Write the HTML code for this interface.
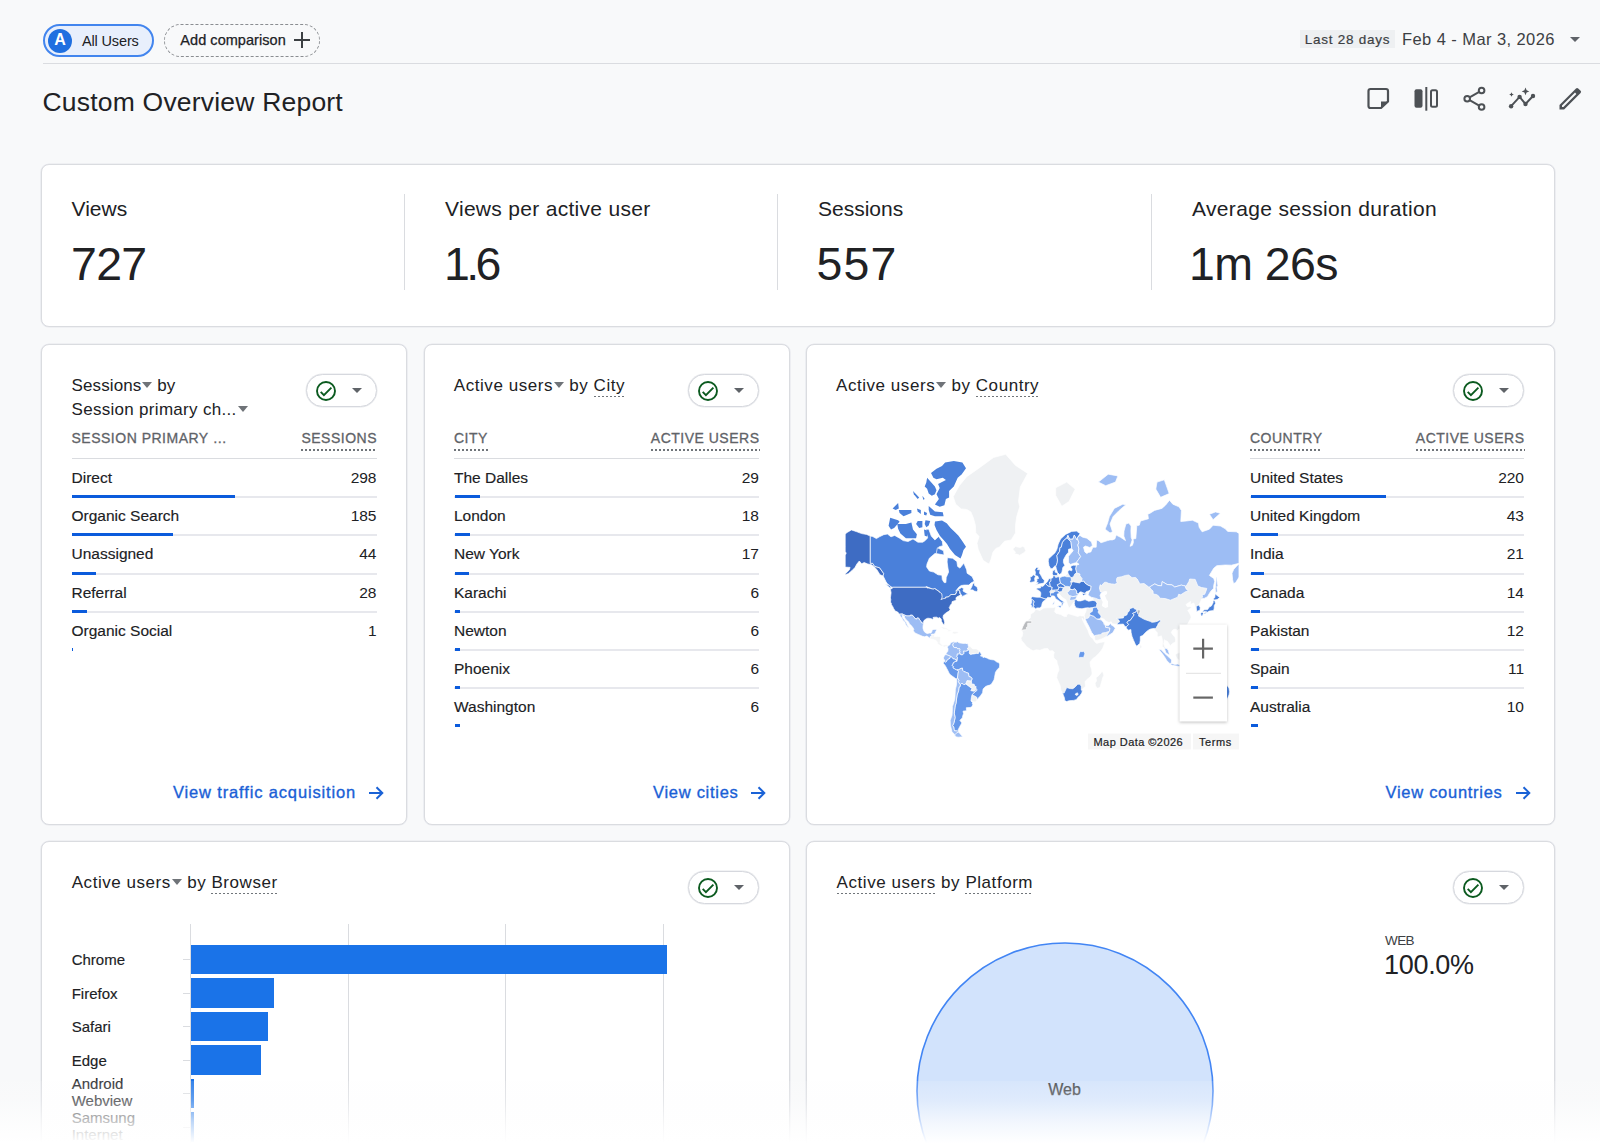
<!DOCTYPE html>
<html><head><meta charset="utf-8">
<style>
*{margin:0;padding:0;box-sizing:border-box}
html,body{width:1600px;height:1147px;overflow:hidden;background:#f8f9fa;font-family:"Liberation Sans",sans-serif;color:#202124;position:relative}
.a{position:absolute;white-space:nowrap;line-height:1}
.ttl{font-size:17px;color:#202124;letter-spacing:0.55px}
.tri{display:inline-block;width:0;height:0;border-left:5.5px solid transparent;border-right:5.5px solid transparent;border-top:6px solid #6f7378;vertical-align:3px;margin-left:1px}
.du{background-image:linear-gradient(to right,#70757a 60%,transparent 60%);background-size:4px 1.5px;background-repeat:repeat-x;background-position:0 100%;padding-bottom:2px}
.thu{background-image:linear-gradient(to right,#70757a 60%,transparent 60%);background-size:4px 2px;background-repeat:repeat-x;background-position:0 100%;padding-bottom:5px}
</style></head>
<body>
<div class="a" style="left:43px;top:24px;width:111px;height:33px;border:2px solid #4285ee;border-radius:17px;background:#e8effc"></div>
<div class="a" style="left:48px;top:28.5px;width:24px;height:24px;border-radius:50%;background:#1f6fe0"></div>
<div class="a" style="left:-240.00px;width:600px;text-align:center;top:32.46px;font-size:16px;color:#fff;font-weight:bold">A</div>
<div class="a" style="left:82.00px;top:33.63px;font-size:14.5px;color:#202124;letter-spacing:-0.15px">All Users</div>
<div class="a" style="left:164px;top:24px;width:156px;height:33px;border:1.5px dashed #8a8d91;border-radius:17px"></div>
<div class="a" style="left:180.30px;top:32.53px;font-size:14.5px;color:#202124;-webkit-text-stroke:0.25px #202124;letter-spacing:0.05px">Add comparison</div>
<svg class="a" style="left:294px;top:32px" width="16" height="16"><path d="M8 0v16M0 8h16" stroke="#3c4043" stroke-width="2"/></svg>
<div class="a" style="left:1300px;top:30px;width:95px;height:18px;background:#eef0f2"></div>
<div class="a" style="left:1304.80px;top:32.97px;font-size:13.5px;color:#3c4043;letter-spacing:0.75px;-webkit-text-stroke:0.2px #3c4043">Last 28 days</div>
<div class="a" style="left:1402.00px;top:30.83px;font-size:16.5px;color:#3c4043;letter-spacing:0.42px">Feb 4 - Mar 3, 2026</div>
<svg class="a" style="left:1570px;top:37px" width="10" height="5"><path d="M0 0h10L5 5z" fill="#5f6368"/></svg>
<div class="a" style="left:43px;top:63px;width:1557px;height:1px;background:#dadce0"></div>
<div class="a" style="left:42.50px;top:89.17px;font-size:26.5px;letter-spacing:0.2px">Custom Overview Report</div>
<svg class="a" style="left:1360px;top:80px" width="230" height="40" viewBox="1360 80 230 40">
<g fill="none" stroke="#4d5155" stroke-width="2.2" stroke-linejoin="round">
<path d="M1381 108H1370.5a2 2 0 0 1-2-2V91a2 2 0 0 1 2-2h15.5a2 2 0 0 1 2 2v10.5z"/>
</g>
<path d="M1381 108v-6.5h7z" fill="#4d5155"/>
<rect x="1414.5" y="89.3" width="8" height="18.5" rx="2" fill="#4d5155"/>
<rect x="1431" y="90.3" width="6" height="16.5" rx="1.5" fill="none" stroke="#4d5155" stroke-width="2"/>
<rect x="1425.3" y="87" width="2" height="23.7" fill="#4d5155"/>
<g stroke="#4d5155" stroke-width="2" fill="none">
<circle cx="1481.6" cy="90.5" r="2.8"/><circle cx="1467.2" cy="98.7" r="2.8"/><circle cx="1481.6" cy="107" r="2.8"/>
<path d="M1469.6 97.3L1479.2 91.9M1469.6 100.1L1479.2 105.6"/>
<path d="M1511.1 106.2L1519.6 96.9L1525.5 104L1533 96"/>
</g>
<g fill="#4d5155">
<circle cx="1511.1" cy="106.2" r="2.2"/><circle cx="1519.6" cy="96.9" r="2.2"/><circle cx="1525.5" cy="104" r="2.2"/><circle cx="1533" cy="96" r="2.2"/>
<path d="M1525.5 87.6l1.1 2.7 2.7 1.1-2.7 1.1-1.1 2.7-1.1-2.7-2.7-1.1 2.7-1.1z"/>
<path d="M1511.5 92.2l.7 1.6 1.6.7-1.6.7-.7 1.6-.7-1.6-1.6-.7 1.6-.7z"/>
<path d="M1559.5 109.5v-4.6l16.5-16.5a1.6 1.6 0 0 1 2.2 0l2.4 2.4a1.6 1.6 0 0 1 0 2.2L1564.1 109.5z M1562 107h1.4l13-13-1.4-1.4-13 13z" fill-rule="evenodd"/>
</g>
</svg>
<div class="a" style="left:41px;top:164px;width:1514px;height:163px;background:#fff;border:1px solid #dadce0;border-radius:8px;box-shadow:0 0 0 0.6px rgba(218,220,228,.6)"></div>
<div class="a" style="left:404px;top:194px;width:1px;height:96px;background:#dadce0"></div>
<div class="a" style="left:777px;top:194px;width:1px;height:96px;background:#dadce0"></div>
<div class="a" style="left:1151px;top:194px;width:1px;height:96px;background:#dadce0"></div>
<div class="a" style="left:71.50px;top:197.82px;font-size:21px;">Views</div>
<div class="a" style="left:445.00px;top:197.82px;font-size:21px;letter-spacing:0.3px">Views per active user</div>
<div class="a" style="left:818.00px;top:197.82px;font-size:21px;">Sessions</div>
<div class="a" style="left:1192.00px;top:197.82px;font-size:21px;letter-spacing:0.35px">Average session duration</div>
<div class="a" style="left:71.00px;top:240.64px;font-size:46.5px;letter-spacing:-0.7px">727</div>
<div class="a" style="left:444.00px;top:240.64px;font-size:46.5px;letter-spacing:-3.6px">1.6</div>
<div class="a" style="left:816.50px;top:240.64px;font-size:46.5px;letter-spacing:1.2px">557</div>
<div class="a" style="left:1189.00px;top:240.64px;font-size:46.5px;letter-spacing:-0.6px">1m 26s</div>
<div class="a" style="left:41px;top:344px;width:366px;height:481px;background:#fff;border:1px solid #dadce0;border-radius:8px;box-shadow:0 0 0 0.6px rgba(218,220,228,.6)"></div>
<div class="a" style="left:424px;top:344px;width:366px;height:481px;background:#fff;border:1px solid #dadce0;border-radius:8px;box-shadow:0 0 0 0.6px rgba(218,220,228,.6)"></div>
<div class="a" style="left:806px;top:344px;width:749px;height:481px;background:#fff;border:1px solid #dadce0;border-radius:8px;box-shadow:0 0 0 0.6px rgba(218,220,228,.6)"></div>
<div class="a" style="left:41px;top:841px;width:749px;height:460px;background:#fff;border:1px solid #dadce0;border-radius:8px;box-shadow:0 0 0 0.6px rgba(218,220,228,.6)"></div>
<div class="a" style="left:806px;top:841px;width:749px;height:460px;background:#fff;border:1px solid #dadce0;border-radius:8px;box-shadow:0 0 0 0.6px rgba(218,220,228,.6)"></div>
<div class="a ttl" style="left:71.5px;top:376.91px;letter-spacing:0.12px">Sessions<span class="tri"></span> by</div>
<div class="a ttl" style="left:71.5px;top:400.61px;letter-spacing:0.3px">Session primary ch...<span class="tri"></span></div>
<div class="a" style="left:306px;top:374px;width:71px;height:33px;border:1px solid #d6d8de;border-radius:17px;background:#fff;box-shadow:0 0 0 0.5px rgba(214,216,222,.6)"></div>
<svg class="a" style="left:315px;top:379.5px" width="22" height="22"><circle cx="11" cy="11" r="9" fill="none" stroke="#0b5a1f" stroke-width="1.9"/><path d="M5.7 11.9L8.9 15.1L16.4 7.6" fill="none" stroke="#0b5a1f" stroke-width="1.9"/></svg>
<svg class="a" style="left:352px;top:388.0px" width="10" height="5"><path d="M0 0h10L5 5z" fill="#5f6368"/></svg>
<div class="a" style="left:71.50px;top:431.15px;font-size:14px;color:#5f6368;letter-spacing:0.5px;-webkit-text-stroke:0.3px #5f6368"><span class="">SESSION PRIMARY …</span></div>
<div class="a" style="right:1223.00px;top:431.15px;font-size:14px;color:#5f6368;letter-spacing:0.5px;-webkit-text-stroke:0.3px #5f6368"><span class="thu">SESSIONS</span></div>
<div class="a" style="left:71.5px;top:458px;width:305.0px;height:1px;background:#dadce0"></div>
<div class="a" style="left:71.50px;top:469.88px;font-size:15.5px;color:#202124;-webkit-text-stroke:0.15px #202124">Direct</div>
<div class="a" style="right:1223.50px;top:469.88px;font-size:15.5px;color:#202124">298</div>
<div class="a" style="left:71.5px;top:496px;width:305.0px;height:2px;background:#e7e8ed"></div>
<div class="a" style="left:72.0px;top:495px;width:163.2px;height:3px;background:#0b5bdc"></div>
<div class="a" style="left:71.50px;top:508.13px;font-size:15.5px;color:#202124;-webkit-text-stroke:0.15px #202124">Organic Search</div>
<div class="a" style="right:1223.50px;top:508.13px;font-size:15.5px;color:#202124">185</div>
<div class="a" style="left:71.5px;top:534px;width:305.0px;height:2px;background:#e7e8ed"></div>
<div class="a" style="left:72.0px;top:533px;width:101.3px;height:3px;background:#0b5bdc"></div>
<div class="a" style="left:71.50px;top:546.38px;font-size:15.5px;color:#202124;-webkit-text-stroke:0.15px #202124">Unassigned</div>
<div class="a" style="right:1223.50px;top:546.38px;font-size:15.5px;color:#202124">44</div>
<div class="a" style="left:71.5px;top:573px;width:305.0px;height:2px;background:#e7e8ed"></div>
<div class="a" style="left:72.0px;top:572px;width:24.1px;height:3px;background:#0b5bdc"></div>
<div class="a" style="left:71.50px;top:584.63px;font-size:15.5px;color:#202124;-webkit-text-stroke:0.15px #202124">Referral</div>
<div class="a" style="right:1223.50px;top:584.63px;font-size:15.5px;color:#202124">28</div>
<div class="a" style="left:71.5px;top:611px;width:305.0px;height:2px;background:#e7e8ed"></div>
<div class="a" style="left:72.0px;top:610px;width:15.3px;height:3px;background:#0b5bdc"></div>
<div class="a" style="left:71.50px;top:622.88px;font-size:15.5px;color:#202124;-webkit-text-stroke:0.15px #202124">Organic Social</div>
<div class="a" style="right:1223.50px;top:622.88px;font-size:15.5px;color:#202124">1</div>
<div class="a" style="left:72.0px;top:648px;width:1.2px;height:3px;background:#0b5bdc"></div>
<div class="a" style="left:173.00px;top:784.03px;font-size:16.5px;color:#1a5fd6;letter-spacing:0.85px;-webkit-text-stroke:0.35px #1a5fd6">View traffic acquisition</div>
<svg class="a" style="left:367.8px;top:785.5px" width="16" height="14"><path d="M1 7h13M8.5 1.2L14.3 7 8.5 12.8" fill="none" stroke="#1a62d6" stroke-width="2"/></svg>
<div class="a ttl" style="left:453.8px;top:377.21px">Active users<span class="tri"></span> by <span class="du">City</span></div>
<div class="a" style="left:688px;top:374px;width:71px;height:33px;border:1px solid #d6d8de;border-radius:17px;background:#fff;box-shadow:0 0 0 0.5px rgba(214,216,222,.6)"></div>
<svg class="a" style="left:697px;top:379.5px" width="22" height="22"><circle cx="11" cy="11" r="9" fill="none" stroke="#0b5a1f" stroke-width="1.9"/><path d="M5.7 11.9L8.9 15.1L16.4 7.6" fill="none" stroke="#0b5a1f" stroke-width="1.9"/></svg>
<svg class="a" style="left:734px;top:388.0px" width="10" height="5"><path d="M0 0h10L5 5z" fill="#5f6368"/></svg>
<div class="a" style="left:454.00px;top:431.15px;font-size:14px;color:#5f6368;letter-spacing:0.5px;-webkit-text-stroke:0.3px #5f6368"><span class="thu">CITY</span></div>
<div class="a" style="right:840.50px;top:431.15px;font-size:14px;color:#5f6368;letter-spacing:0.5px;-webkit-text-stroke:0.3px #5f6368"><span class="thu">ACTIVE USERS</span></div>
<div class="a" style="left:454px;top:458px;width:305px;height:1px;background:#dadce0"></div>
<div class="a" style="left:454.00px;top:469.88px;font-size:15.5px;color:#202124;-webkit-text-stroke:0.15px #202124">The Dalles</div>
<div class="a" style="right:841.00px;top:469.88px;font-size:15.5px;color:#202124">29</div>
<div class="a" style="left:454px;top:496px;width:305px;height:2px;background:#e7e8ed"></div>
<div class="a" style="left:454.5px;top:495px;width:25.0px;height:3px;background:#0b5bdc"></div>
<div class="a" style="left:454.00px;top:508.13px;font-size:15.5px;color:#202124;-webkit-text-stroke:0.15px #202124">London</div>
<div class="a" style="right:841.00px;top:508.13px;font-size:15.5px;color:#202124">18</div>
<div class="a" style="left:454px;top:534px;width:305px;height:2px;background:#e7e8ed"></div>
<div class="a" style="left:454.5px;top:533px;width:15.5px;height:3px;background:#0b5bdc"></div>
<div class="a" style="left:454.00px;top:546.38px;font-size:15.5px;color:#202124;-webkit-text-stroke:0.15px #202124">New York</div>
<div class="a" style="right:841.00px;top:546.38px;font-size:15.5px;color:#202124">17</div>
<div class="a" style="left:454px;top:573px;width:305px;height:2px;background:#e7e8ed"></div>
<div class="a" style="left:454.5px;top:572px;width:14.6px;height:3px;background:#0b5bdc"></div>
<div class="a" style="left:454.00px;top:584.63px;font-size:15.5px;color:#202124;-webkit-text-stroke:0.15px #202124">Karachi</div>
<div class="a" style="right:841.00px;top:584.63px;font-size:15.5px;color:#202124">6</div>
<div class="a" style="left:454px;top:611px;width:305px;height:2px;background:#e7e8ed"></div>
<div class="a" style="left:454.5px;top:610px;width:5.2px;height:3px;background:#0b5bdc"></div>
<div class="a" style="left:454.00px;top:622.88px;font-size:15.5px;color:#202124;-webkit-text-stroke:0.15px #202124">Newton</div>
<div class="a" style="right:841.00px;top:622.88px;font-size:15.5px;color:#202124">6</div>
<div class="a" style="left:454px;top:649px;width:305px;height:2px;background:#e7e8ed"></div>
<div class="a" style="left:454.5px;top:648px;width:5.2px;height:3px;background:#0b5bdc"></div>
<div class="a" style="left:454.00px;top:661.13px;font-size:15.5px;color:#202124;-webkit-text-stroke:0.15px #202124">Phoenix</div>
<div class="a" style="right:841.00px;top:661.13px;font-size:15.5px;color:#202124">6</div>
<div class="a" style="left:454px;top:687px;width:305px;height:2px;background:#e7e8ed"></div>
<div class="a" style="left:454.5px;top:686px;width:5.2px;height:3px;background:#0b5bdc"></div>
<div class="a" style="left:454.00px;top:699.38px;font-size:15.5px;color:#202124;-webkit-text-stroke:0.15px #202124">Washington</div>
<div class="a" style="right:841.00px;top:699.38px;font-size:15.5px;color:#202124">6</div>
<div class="a" style="left:454.5px;top:724px;width:5.2px;height:3px;background:#0b5bdc"></div>
<div class="a" style="left:653.00px;top:784.03px;font-size:16.5px;color:#1a5fd6;letter-spacing:0.72px;-webkit-text-stroke:0.35px #1a5fd6">View cities</div>
<svg class="a" style="left:750.3px;top:785.5px" width="16" height="14"><path d="M1 7h13M8.5 1.2L14.3 7 8.5 12.8" fill="none" stroke="#1a62d6" stroke-width="2"/></svg>
<div class="a ttl" style="left:836px;top:377.21px">Active users<span class="tri"></span> by <span class="du">Country</span></div>
<div class="a" style="left:1453px;top:374px;width:71px;height:33px;border:1px solid #d6d8de;border-radius:17px;background:#fff;box-shadow:0 0 0 0.5px rgba(214,216,222,.6)"></div>
<svg class="a" style="left:1462px;top:379.5px" width="22" height="22"><circle cx="11" cy="11" r="9" fill="none" stroke="#0b5a1f" stroke-width="1.9"/><path d="M5.7 11.9L8.9 15.1L16.4 7.6" fill="none" stroke="#0b5a1f" stroke-width="1.9"/></svg>
<svg class="a" style="left:1499px;top:388.0px" width="10" height="5"><path d="M0 0h10L5 5z" fill="#5f6368"/></svg>
<div class="a" style="left:1250.00px;top:431.15px;font-size:14px;color:#5f6368;letter-spacing:0.5px;-webkit-text-stroke:0.3px #5f6368"><span class="thu">COUNTRY</span></div>
<div class="a" style="right:75.50px;top:431.15px;font-size:14px;color:#5f6368;letter-spacing:0.5px;-webkit-text-stroke:0.3px #5f6368"><span class="thu">ACTIVE USERS</span></div>
<div class="a" style="left:1250px;top:458px;width:274px;height:1px;background:#dadce0"></div>
<div class="a" style="left:1250.00px;top:469.88px;font-size:15.5px;color:#202124;-webkit-text-stroke:0.15px #202124">United States</div>
<div class="a" style="right:76.00px;top:469.88px;font-size:15.5px;color:#202124">220</div>
<div class="a" style="left:1250px;top:496px;width:274px;height:2px;background:#e7e8ed"></div>
<div class="a" style="left:1250.5px;top:495px;width:135.0px;height:3px;background:#0b5bdc"></div>
<div class="a" style="left:1250.00px;top:508.13px;font-size:15.5px;color:#202124;-webkit-text-stroke:0.15px #202124">United Kingdom</div>
<div class="a" style="right:76.00px;top:508.13px;font-size:15.5px;color:#202124">43</div>
<div class="a" style="left:1250px;top:534px;width:274px;height:2px;background:#e7e8ed"></div>
<div class="a" style="left:1250.5px;top:533px;width:27.2px;height:3px;background:#0b5bdc"></div>
<div class="a" style="left:1250.00px;top:546.38px;font-size:15.5px;color:#202124;-webkit-text-stroke:0.15px #202124">India</div>
<div class="a" style="right:76.00px;top:546.38px;font-size:15.5px;color:#202124">21</div>
<div class="a" style="left:1250px;top:573px;width:274px;height:2px;background:#e7e8ed"></div>
<div class="a" style="left:1250.5px;top:572px;width:13.8px;height:3px;background:#0b5bdc"></div>
<div class="a" style="left:1250.00px;top:584.63px;font-size:15.5px;color:#202124;-webkit-text-stroke:0.15px #202124">Canada</div>
<div class="a" style="right:76.00px;top:584.63px;font-size:15.5px;color:#202124">14</div>
<div class="a" style="left:1250px;top:611px;width:274px;height:2px;background:#e7e8ed"></div>
<div class="a" style="left:1250.5px;top:610px;width:9.5px;height:3px;background:#0b5bdc"></div>
<div class="a" style="left:1250.00px;top:622.88px;font-size:15.5px;color:#202124;-webkit-text-stroke:0.15px #202124">Pakistan</div>
<div class="a" style="right:76.00px;top:622.88px;font-size:15.5px;color:#202124">12</div>
<div class="a" style="left:1250px;top:649px;width:274px;height:2px;background:#e7e8ed"></div>
<div class="a" style="left:1250.5px;top:648px;width:8.3px;height:3px;background:#0b5bdc"></div>
<div class="a" style="left:1250.00px;top:661.13px;font-size:15.5px;color:#202124;-webkit-text-stroke:0.15px #202124">Spain</div>
<div class="a" style="right:76.00px;top:661.13px;font-size:15.5px;color:#202124">11</div>
<div class="a" style="left:1250px;top:687px;width:274px;height:2px;background:#e7e8ed"></div>
<div class="a" style="left:1250.5px;top:686px;width:7.7px;height:3px;background:#0b5bdc"></div>
<div class="a" style="left:1250.00px;top:699.38px;font-size:15.5px;color:#202124;-webkit-text-stroke:0.15px #202124">Australia</div>
<div class="a" style="right:76.00px;top:699.38px;font-size:15.5px;color:#202124">10</div>
<div class="a" style="left:1250.5px;top:724px;width:7.1px;height:3px;background:#0b5bdc"></div>
<div class="a" style="left:1385.50px;top:784.03px;font-size:16.5px;color:#1a5fd6;letter-spacing:0.72px;-webkit-text-stroke:0.35px #1a5fd6">View countries</div>
<svg class="a" style="left:1515.3px;top:785.5px" width="16" height="14"><path d="M1 7h13M8.5 1.2L14.3 7 8.5 12.8" fill="none" stroke="#1a62d6" stroke-width="2"/></svg>
<svg class="a" style="left:0;top:0" width="1600" height="1147" viewBox="0 0 1600 1147"><defs><clipPath id="mc"><rect x="845.6" y="440" width="393" height="310"/></clipPath></defs><g clip-path="url(#mc)" stroke-linejoin="round">
<path d="M953.2 496.7L959.3 485.7L966.7 476.7L978.9 468.2L993.5 457.5L1005.7 454.3L1015.5 465.4L1027.7 473.4L1020.3 487.1L1018.5 501.4L1019.7 506.8L1016.7 516.6L1015.5 525.2L1015.5 532.9L1011.2 539.9L1004.5 541.2L999.6 546.9L995.9 548.4L992.9 552.2L991.1 559.0L989.2 564.0L986.8 562.8L983.1 560.3L980.7 555.0L978.2 549.3L977.0 543.2L979.1 536.5L975.8 532.9L975.4 525.2L973.4 518.0L970.9 511.9L966.7 509.4L961.2 508.9L955.7 504.2L953.2 496.7Z" fill="#eff1f3" stroke="#fff" stroke-width="0.7"/>
<path d="M1012.7 549.0L1015.5 546.6L1020.3 547.5L1022.8 546.3L1024.6 547.8L1025.7 550.7L1024.0 552.7L1019.7 555.2L1016.7 554.1L1014.6 553.9L1015.5 552.2L1012.7 549.0Z" fill="#eff1f3" stroke="#fff" stroke-width="0.7"/>
<path d="M1055.7 495.5L1061.8 506.3L1069.1 501.4L1075.2 489.1L1066.7 482.1L1055.7 487.7Z" fill="#eff1f3" stroke="#fff" stroke-width="0.7"/>
<path d="M929.8 638.3L930.4 636.3L932.0 636.3L931.3 634.7L931.4 634.1L933.5 634.1L934.6 633.3L934.7 635.1L934.2 636.5L935.5 636.6L937.6 636.4L939.5 636.6L940.8 637.7L940.3 640.2L940.2 642.7L941.5 644.4L942.9 645.4L944.7 644.8L946.5 644.7L948.0 645.5L947.3 647.4L946.3 646.0L944.2 647.3L943.6 646.8L942.9 646.1L941.0 646.0L937.7 644.0L937.6 642.7L936.3 640.8L935.3 640.2L933.2 639.6L930.8 639.0Z" fill="#f4f5f6" stroke="#fff" stroke-width="0.7"/>
<path d="M938.7 628.8L940.4 627.4L942.3 627.0L944.1 627.3L946.5 628.1L948.1 629.2L950.1 629.9L951.8 631.0L947.5 631.4L948.2 630.5L946.5 629.3L943.5 629.0L941.6 628.1Z" fill="#f4f5f6" stroke="#fff" stroke-width="0.7"/>
<path d="M951.5 633.3L953.5 631.4L956.9 631.6L959.0 633.1L956.9 633.6L954.8 634.1Z" fill="#f4f5f6" stroke="#fff" stroke-width="0.7"/>
<path d="M968.1 645.7L970.2 646.4L972.6 648.9L975.2 648.9L976.5 649.1L978.9 650.2L979.3 651.1L978.4 653.5L976.4 653.4L974.0 653.9L972.0 654.1L970.9 654.6L969.6 653.9L969.2 652.8L969.6 651.1L968.9 649.8L968.2 649.8L967.4 649.0L967.6 648.0L968.7 647.6L968.4 646.6L969.3 645.9Z" fill="#eff1f3" stroke="#fff" stroke-width="0.7"/>
<path d="M971.3 680.9L971.5 681.3L971.7 683.9L974.2 684.3L974.7 686.4L976.1 686.4L975.7 688.6L975.4 690.5L973.6 691.2L970.8 690.6L972.0 688.6L969.1 686.4L965.8 684.0L966.3 682.6L967.0 680.6Z" fill="#eff1f3" stroke="#fff" stroke-width="0.7"/>
<path d="M972.0 694.9L974.5 695.9L976.9 697.4L977.2 700.0L975.3 701.9L973.7 701.7L971.8 701.2L971.1 700.3L971.4 697.6Z" fill="#eff1f3" stroke="#fff" stroke-width="0.7"/>
<path d="M1074.0 602.0L1071.0 605.9L1069.1 608.2L1067.9 605.2L1066.0 599.9L1061.8 597.1L1058.9 593.6L1057.3 594.0L1057.5 596.2L1061.8 600.4L1064.9 602.6L1062.4 605.2L1061.3 605.9L1061.6 602.8L1059.4 601.2L1055.7 598.7L1054.5 596.2L1051.5 596.6L1047.8 597.2L1046.1 598.9L1043.4 601.2L1042.3 603.0L1041.4 606.6L1039.7 607.9L1035.5 609.0L1034.6 607.8L1031.4 607.5L1030.7 604.7L1031.4 599.7L1031.0 597.7L1032.5 596.7L1040.1 597.2L1040.8 592.8L1036.7 589.4L1036.7 588.1L1040.8 586.0L1044.1 585.3L1046.4 582.8L1047.9 580.8L1048.8 578.7L1052.8 577.7L1052.2 574.1L1052.8 570.8L1055.2 569.4L1055.1 572.1L1057.4 575.4L1058.9 576.5L1065.0 576.0L1067.9 573.0L1067.9 571.5L1071.7 570.8L1070.8 567.6L1071.0 565.9L1076.5 565.2L1079.1 564.3L1091.1 568.8L1097.2 585.5L1091.1 591.0L1088.9 590.8L1086.2 591.7L1085.0 593.5L1083.2 592.8L1081.3 591.9L1079.9 591.9L1078.9 593.1L1078.4 594.0L1077.2 595.9L1075.8 598.7L1076.5 599.7L1077.7 600.9Z" fill="#eff1f3" stroke="#fff" stroke-width="0.7"/>
<path d="M1077.7 600.9L1080.7 600.9L1085.0 599.6L1088.7 601.2L1092.9 600.4L1093.1 598.6L1091.1 597.2L1088.0 595.0L1089.0 592.2L1090.7 589.5L1097.2 575.4L1115.5 564.0L1164.3 559.0L1200.9 568.8L1209.4 577.5L1213.7 588.3L1207.4 596.7L1204.6 598.2L1201.6 598.9L1200.8 601.2L1198.9 604.9L1200.4 607.8L1200.0 610.2L1196.6 611.4L1195.0 606.7L1193.9 603.0L1190.3 604.4L1190.7 601.4L1188.1 603.0L1186.0 604.5L1187.4 606.7L1189.9 606.4L1191.8 607.2L1187.7 610.5L1189.3 612.7L1190.9 615.9L1191.0 617.9L1188.9 621.8L1187.5 624.4L1184.4 627.4L1180.8 628.4L1178.7 629.2L1177.0 630.9L1176.3 629.4L1174.1 629.3L1172.5 630.3L1171.3 632.5L1172.5 634.5L1175.0 637.3L1175.6 639.7L1175.5 641.9L1172.5 643.4L1170.4 645.7L1167.3 641.2L1165.4 640.6L1164.4 639.7L1163.7 643.9L1164.9 647.0L1167.0 648.6L1168.4 650.7L1169.4 654.4L1168.6 654.6L1165.9 652.8L1164.9 650.9L1164.7 648.2L1162.2 646.4L1162.5 643.3L1162.5 640.4L1161.4 635.8L1158.7 636.8L1157.2 636.4L1157.3 632.8L1155.0 630.3L1154.3 628.4L1151.7 628.8L1150.0 629.2L1148.3 630.2L1145.8 632.2L1142.7 635.6L1140.3 636.5L1140.3 640.2L1139.8 643.5L1137.7 645.3L1136.8 646.3L1135.4 644.5L1133.6 640.4L1132.0 636.4L1131.1 632.5L1130.9 629.6L1128.3 630.2L1126.5 628.2L1126.1 627.0L1124.5 626.0L1123.4 624.1L1117.5 624.4L1112.3 623.7L1111.2 621.8L1109.0 622.6L1105.1 620.7L1104.3 619.2L1100.7 617.7L1101.5 620.0L1103.4 622.3L1104.9 623.1L1105.3 625.6L1108.2 625.8L1110.0 624.0L1111.0 623.0L1111.1 624.8L1113.8 626.4L1115.3 628.2L1112.8 632.7L1110.0 634.5L1106.0 636.9L1101.5 638.9L1097.2 640.4L1095.1 640.6L1094.4 635.9L1091.7 632.5L1089.9 628.6L1086.8 622.6L1084.9 618.5L1084.1 615.9L1085.0 613.4L1086.2 610.5L1086.2 607.9L1079.5 608.5L1075.8 607.5L1074.6 605.2L1074.6 601.5L1076.5 600.9Z" fill="#eff1f3" stroke="#fff" stroke-width="0.7"/>
<path d="M1102.3 592.1L1105.1 591.0L1107.2 591.5L1107.0 594.0L1104.9 595.4L1106.6 599.6L1108.1 601.5L1107.9 605.2L1108.2 606.9L1105.4 607.9L1102.6 606.6L1101.8 605.2L1102.7 602.0L1101.3 599.6L1100.2 597.9L1099.9 594.8L1100.5 593.3Z" fill="#ffffff"/>
<path d="M1035.5 609.2L1039.9 610.4L1043.5 608.2L1046.0 607.8L1052.8 607.6L1054.7 607.2L1055.7 607.6L1054.6 611.7L1056.0 613.2L1060.8 614.5L1064.3 616.6L1066.6 616.5L1066.7 614.8L1068.5 613.7L1072.8 615.0L1077.7 616.5L1080.1 615.5L1081.7 616.0L1084.0 615.9L1084.9 618.5L1083.2 620.5L1082.1 617.9L1083.3 621.5L1085.6 626.1L1087.8 629.9L1089.1 633.8L1090.7 637.0L1092.6 638.3L1095.0 642.1L1096.7 643.4L1100.1 642.4L1104.9 641.7L1104.5 643.4L1102.7 648.2L1100.9 650.9L1098.4 653.8L1095.4 656.8L1092.9 658.4L1090.1 661.9L1090.4 665.9L1091.6 669.1L1092.1 674.1L1090.2 677.0L1087.2 679.2L1085.0 681.8L1085.6 686.3L1082.4 689.0L1082.3 692.6L1080.0 695.4L1076.2 699.7L1073.5 700.4L1069.1 700.7L1066.7 701.6L1064.7 700.6L1064.5 698.2L1063.3 693.9L1060.8 690.1L1060.0 685.0L1058.6 682.3L1056.7 677.7L1057.2 674.0L1059.0 670.1L1058.4 666.6L1057.3 663.7L1056.8 660.6L1053.8 658.0L1053.6 655.0L1054.3 652.4L1052.7 650.7L1049.6 650.9L1047.8 648.5L1044.1 648.7L1039.9 650.3L1036.4 649.8L1033.1 650.8L1030.7 649.5L1026.6 646.6L1023.6 642.7L1021.8 640.9L1020.9 638.0L1022.2 636.3L1022.7 633.2L1021.7 629.6L1022.9 626.4L1024.6 623.1L1026.4 621.1L1030.3 617.9L1030.6 614.2L1034.0 612.0Z" fill="#eff1f3" stroke="#fff" stroke-width="0.7"/>
<path d="M1102.4 671.0L1103.9 675.2L1102.7 677.9L1100.0 687.5L1097.2 688.3L1095.5 685.8L1095.1 683.1L1096.5 681.0L1096.0 677.7L1098.8 675.5Z" fill="#eff1f3" stroke="#fff" stroke-width="0.7"/>
<path d="M1021.4 630.2L1026.4 629.6L1026.4 627.3L1027.7 626.6L1027.7 623.3L1031.7 623.3L1031.7 621.0L1026.2 621.0L1024.6 623.1L1022.9 626.4Z" fill="#b9bbbe" stroke="#fff" stroke-width="0.7"/>
<path d="M1139.7 648.9L1142.1 647.0L1140.1 644.2Z" fill="#eff1f3" stroke="#fff" stroke-width="0.7"/>
<path d="M1188.8 627.3L1189.9 624.4L1191.0 624.9L1189.7 628.6Z" fill="#eff1f3" stroke="#fff" stroke-width="0.7"/>
<path d="M1158.8 649.5L1161.2 649.8L1164.8 653.5L1169.2 657.4L1171.6 659.9L1171.4 663.3L1169.8 663.4L1167.1 661.1L1165.3 658.0L1162.6 654.1Z" fill="#eff1f3" stroke="#fff" stroke-width="0.7"/>
<path d="M1175.3 654.4L1176.5 658.0L1178.9 660.2L1184.2 660.5L1185.6 655.6L1187.5 650.1L1185.0 647.6L1182.6 650.1L1180.2 652.5L1177.7 653.1Z" fill="#eff1f3" stroke="#fff" stroke-width="0.7"/>
<path d="M870.3 536.1L866.6 534.4L861.7 533.6L856.9 531.8L851.4 529.9L847.1 532.5L843.4 535.4L839.8 538.6L842.2 542.5L845.0 546.6L842.2 546.0L837.3 549.0L839.8 551.9L845.9 552.2L846.1 554.1L841.0 557.4L839.7 560.3L841.5 562.8L844.7 564.0L844.8 567.1L850.1 567.4L849.3 569.9L845.9 573.2L842.8 575.4L848.3 573.7L852.0 570.6L855.0 567.4L856.9 564.0L859.3 561.0L861.7 563.8L864.2 562.5L867.8 564.0L871.5 564.7L874.5 566.9L877.0 569.9L880.0 574.8L883.1 576.0L883.7 573.5L879.7 567.8L874.5 566.2L872.7 563.3L870.3 563.3Z" fill="#3e6cc3" stroke="#fff" stroke-width="0.7"/>
<path d="M870.3 536.1L872.7 536.5L876.4 538.6L879.4 536.8L883.7 534.7L887.4 534.0L891.0 536.8L894.7 535.4L899.6 538.2L903.2 540.6L908.1 541.5L913.0 538.9L917.9 542.2L922.7 542.2L925.2 540.6L927.6 537.9L925.9 529.2L928.8 529.2L931.3 536.1L934.9 539.9L938.6 536.5L942.3 541.5L942.9 545.7L938.8 546.9L937.4 553.6L934.9 553.6L929.4 558.2L927.0 564.0L926.6 566.9L929.4 571.0L933.7 572.1L938.0 574.8L941.9 575.2L942.3 579.6L944.1 582.6L945.9 582.6L946.2 577.5L948.6 572.1L947.8 567.1L947.1 562.0L947.4 557.7L952.6 558.2L956.9 561.5L957.6 566.4L959.9 568.1L962.8 564.5L963.9 563.3L966.7 569.9L967.1 573.2L972.1 576.5L974.3 581.2L970.9 583.1L968.9 585.1L964.2 585.1L961.2 585.5L958.7 587.3L955.7 591.2L961.5 587.5L963.7 588.4L963.0 591.0L966.7 593.3L967.9 594.0L964.2 595.4L961.8 597.1L961.9 595.0L960.6 594.5L959.6 590.8L956.9 591.5L955.1 594.5L950.9 594.5L948.6 596.9L945.7 597.2L945.9 598.2L941.6 599.6L941.6 594.0L938.8 591.2L934.9 588.6L933.0 589.2L926.4 586.6L926.2 587.3L892.2 587.3L890.4 586.4L888.0 584.5L886.1 582.0L883.7 577.1L883.1 576.0L883.7 573.5L879.7 567.8L874.5 566.2L872.7 563.3L870.3 563.3Z" fill="#4a80da" stroke="#fff" stroke-width="0.7"/>
<path d="M970.0 589.9L971.5 587.3L972.8 584.1L974.3 582.4L974.6 585.5L977.0 586.8L977.9 589.9L976.9 591.7L974.2 591.0L973.0 589.9Z" fill="#4a80da" stroke="#fff" stroke-width="0.7"/>
<path d="M885.5 583.9L889.8 585.5L891.6 588.4L889.2 587.3Z" fill="#4a80da" stroke="#fff" stroke-width="0.7"/>
<path d="M936.2 553.6L944.1 555.0L943.5 550.7L937.4 547.8Z" fill="#4a80da" stroke="#fff" stroke-width="0.7"/>
<path d="M890.2 588.4L892.0 588.8L892.5 587.3L926.2 587.3L926.3 586.6L926.9 587.9L928.8 588.1L932.5 589.0L933.1 589.2L934.6 588.6L938.7 591.2L939.2 592.1L940.4 592.6L941.8 594.0L942.1 596.9L941.6 598.7L940.9 599.6L943.5 598.6L945.9 598.1L945.7 597.2L948.6 596.9L950.2 595.2L950.9 594.5L955.1 594.5L956.0 593.8L956.9 591.5L957.9 590.3L959.1 590.4L959.6 590.8L959.6 593.3L960.7 594.8L958.7 595.9L956.7 596.9L955.9 598.1L956.3 599.9L954.6 600.7L952.0 601.7L952.0 603.6L950.6 604.7L949.7 606.7L949.2 607.5L950.2 609.8L949.0 611.1L947.3 612.1L945.7 613.2L943.5 615.0L943.0 617.3L944.0 619.8L944.7 622.2L944.2 624.4L943.4 624.5L942.5 623.1L941.4 621.2L941.3 619.3L939.8 617.6L938.1 618.2L936.8 617.2L934.5 617.2L933.0 617.5L933.5 618.9L932.3 619.2L930.7 618.5L927.9 618.2L926.4 618.7L924.4 620.1L923.5 621.4L923.7 623.4L921.4 622.7L920.9 621.2L919.7 620.1L918.6 618.0L917.0 618.0L916.5 619.2L914.8 618.3L914.6 617.7L912.4 615.2L910.3 615.2L910.3 615.9L906.8 615.9L902.2 614.2L902.4 613.9L899.4 614.2L897.7 612.0L895.2 611.1L893.6 608.5L892.8 606.7L891.4 604.5L891.3 603.1L890.5 602.2L890.8 599.6L890.4 597.9L891.1 592.8L891.0 592.2Z" fill="#3e6cc3" stroke="#fff" stroke-width="0.7"/>
<path d="M899.4 614.2L902.4 613.9L902.2 614.2L906.8 615.9L910.3 615.9L910.3 615.2L912.4 615.2L914.6 617.7L914.8 618.3L916.5 619.2L917.0 618.0L918.6 618.0L919.7 620.1L920.9 621.2L921.4 622.7L923.7 623.4L923.1 625.6L923.0 628.2L923.7 630.5L924.8 632.2L926.4 633.2L927.1 633.6L929.4 633.1L930.9 633.1L931.9 631.5L932.1 629.9L933.8 629.4L936.2 629.3L936.4 630.6L935.4 632.2L935.1 633.6L933.8 634.0L933.5 634.1L931.4 634.1L931.3 634.7L932.0 636.3L930.4 636.3L929.8 638.3L927.7 636.5L926.8 636.1L924.6 636.8L922.5 636.3L920.7 635.5L918.3 634.4L916.0 633.5L914.3 632.2L913.3 630.7L913.8 629.6L913.2 628.0L911.1 625.3L909.4 624.0L908.7 622.2L907.4 620.7L906.0 619.7L904.7 617.7L904.3 616.0L903.1 615.6L902.2 615.2L902.5 617.5L903.8 619.2L905.2 621.1L906.3 622.6L907.4 625.2L908.8 627.0L908.1 627.4L906.3 625.4L905.4 624.0L905.0 622.2L903.0 620.5L902.0 618.3L900.5 616.6Z" fill="#9dbdf4" stroke="#fff" stroke-width="0.7"/>
<path d="M948.0 645.5L948.6 645.7L950.1 644.5L950.4 643.1L951.8 642.3L954.1 641.6L954.6 642.1L954.0 642.6L953.4 643.4L952.8 644.9L953.7 647.1L954.6 647.5L956.8 647.6L957.6 648.7L959.7 648.6L960.1 649.5L959.6 650.7L960.2 651.8L959.6 652.8L960.3 653.4L960.7 654.7L959.9 653.8L959.3 654.1L957.1 654.1L957.6 655.3L956.9 655.6L956.9 656.4L957.5 657.4L957.0 661.3L956.0 660.8L956.4 659.9L954.5 659.1L953.0 658.8L952.4 657.7L951.0 656.6L950.4 656.3L949.2 655.7L947.9 655.2L946.0 654.5L945.9 654.1L946.4 653.0L947.8 651.3L948.0 649.3L947.8 648.0L947.3 647.4Z" fill="#9dbdf4" stroke="#fff" stroke-width="0.7"/>
<path d="M954.6 642.1L956.7 642.2L957.0 641.2L958.2 642.2L959.1 642.8L961.5 643.2L963.9 643.4L966.8 643.1L965.8 643.4L967.9 643.8L968.2 644.7L968.1 645.7L969.3 645.9L968.4 646.6L968.7 647.6L967.6 648.0L967.4 649.0L968.2 649.8L968.4 650.2L967.1 650.9L965.7 651.3L963.5 651.2L964.2 653.1L962.5 654.9L960.7 654.7L960.3 653.4L959.6 652.8L960.2 651.8L959.6 650.7L960.1 649.5L959.7 648.6L957.6 648.7L956.8 647.6L954.6 647.5L953.7 647.1L952.8 644.9L953.4 643.4L954.0 642.6Z" fill="#9dbdf4" stroke="#fff" stroke-width="0.7"/>
<path d="M946.0 654.5L947.9 655.2L949.2 655.7L950.4 656.3L950.1 658.2L947.3 659.9L946.4 661.7L945.7 662.3L944.2 661.6L944.7 660.4L944.3 659.5L943.5 658.9L943.6 657.4L944.6 655.2Z" fill="#9dbdf4" stroke="#fff" stroke-width="0.7"/>
<path d="M950.4 656.3L951.0 656.6L952.4 657.7L953.0 658.8L954.5 659.1L956.4 659.9L956.0 660.8L957.0 661.3L955.9 661.3L953.4 662.7L953.0 664.2L952.0 665.4L953.6 666.6L953.0 667.7L954.3 668.5L956.2 669.7L957.4 669.7L958.5 671.6L958.1 673.2L957.9 675.1L957.4 678.0L956.4 678.9L955.2 678.3L952.8 676.5L950.6 675.1L949.1 673.2L948.2 671.2L947.0 669.0L945.4 665.9L944.1 664.2L943.2 663.2L944.3 660.4L944.2 661.6L945.7 662.3L946.4 661.7L947.3 659.9L950.1 658.2Z" fill="#6698ea" stroke="#fff" stroke-width="0.7"/>
<path d="M979.3 651.1L981.3 654.1L981.4 655.0L980.4 656.0L983.0 656.4L983.0 657.7L984.0 656.9L987.5 658.2L988.1 658.8L991.1 659.6L994.1 659.9L996.9 662.1L998.9 662.6L999.7 664.8L999.5 667.2L997.2 669.7L995.5 672.2L994.5 677.5L994.0 679.9L992.5 682.3L991.3 684.3L989.8 685.1L987.9 685.6L985.6 686.4L983.1 689.0L982.6 692.8L980.4 695.9L978.5 697.9L977.2 700.0L976.9 697.4L974.5 695.9L972.0 694.9L974.1 692.4L976.7 690.6L976.8 689.3L975.7 688.6L976.1 686.4L974.7 686.4L974.2 684.3L971.7 683.9L971.5 681.3L971.3 680.9L972.1 678.8L971.1 677.2L968.9 676.4L968.5 673.2L966.8 672.8L965.4 672.0L963.9 671.6L962.6 670.3L962.5 668.2L961.0 668.4L958.6 669.8L957.4 669.7L956.2 669.7L954.3 668.5L953.0 667.7L953.6 666.6L952.0 665.4L953.0 664.2L953.4 662.7L955.9 661.3L957.0 661.3L957.5 657.4L956.9 656.4L956.9 655.6L957.6 655.3L957.1 654.1L959.3 654.1L959.9 653.8L960.7 654.7L962.5 654.9L964.2 653.1L963.5 651.2L965.7 651.3L967.1 650.9L968.4 650.2L968.9 649.8L969.6 651.1L969.2 652.8L969.6 653.9L970.9 654.6L972.0 654.1L974.0 653.9L976.4 653.4L978.4 653.5Z" fill="#6698ea" stroke="#fff" stroke-width="0.7"/>
<path d="M957.4 669.7L958.6 669.8L961.0 668.4L962.5 668.2L962.6 670.3L963.9 671.6L965.4 672.0L966.8 672.8L968.5 673.2L968.9 676.4L971.1 677.2L972.1 678.8L971.3 680.9L967.0 680.6L966.3 682.6L965.8 684.0L963.9 684.8L963.0 683.9L961.4 683.5L960.3 684.7L959.1 683.1L958.4 681.7L958.9 680.4L958.0 678.9L957.4 678.0L957.9 675.1L958.1 673.2L958.5 671.6Z" fill="#9dbdf4" stroke="#fff" stroke-width="0.7"/>
<path d="M963.9 684.8L965.8 684.0L969.1 686.4L972.0 688.6L970.8 690.6L973.6 691.2L975.4 690.5L975.7 688.6L976.8 689.3L976.7 690.6L974.1 692.4L972.0 694.9L971.4 697.6L971.1 700.3L970.9 701.0L972.5 702.3L972.3 704.0L973.1 704.0L971.9 706.8L970.1 707.5L966.3 707.7L966.5 710.7L963.0 711.2L963.6 713.7L962.9 715.3L962.3 717.9L959.9 720.3L961.9 722.9L959.6 726.9L958.2 729.8L958.9 731.4L957.5 731.0L954.6 730.8L954.1 729.6L953.7 727.1L952.6 725.6L953.8 723.2L954.5 720.5L955.1 717.6L954.3 713.3L954.7 709.6L955.2 705.8L956.0 703.4L956.5 699.0L957.1 694.9L958.6 690.8L959.0 687.1L960.2 686.4L960.3 684.7L961.4 683.5L963.0 683.9Z" fill="#6698ea" stroke="#fff" stroke-width="0.7"/>
<path d="M957.4 678.0L958.0 678.9L958.9 680.4L958.4 681.7L959.1 683.1L960.3 684.7L960.2 686.4L959.0 687.1L958.6 690.8L957.1 694.9L956.5 699.0L956.0 703.4L955.2 705.8L954.7 709.6L954.3 713.3L955.1 717.6L954.5 720.5L953.8 723.2L952.6 725.6L953.7 727.1L954.1 729.6L954.6 730.8L957.5 731.0L958.9 731.4L956.9 733.9L955.1 734.9L952.0 731.8L950.4 725.1L950.2 720.5L952.0 715.3L952.3 711.2L952.4 706.5L953.0 704.9L954.8 699.0L955.1 694.7L955.4 689.1L956.3 685.8L956.7 681.1L956.4 678.9Z" fill="#9dbdf4" stroke="#fff" stroke-width="0.7"/>
<path d="M958.6 732.0L962.8 736.8L958.6 737.2L956.3 737.0L954.5 734.9L956.9 732.8Z" fill="#9dbdf4" stroke="#fff" stroke-width="0.7"/>
<path d="M1035.3 585.3L1038.6 584.1L1044.0 583.1L1044.4 580.2L1042.5 578.5L1041.6 576.5L1040.2 574.1L1039.5 573.2L1040.1 569.7L1037.4 569.7L1038.5 567.4L1036.2 567.4L1034.7 569.9L1035.5 572.6L1035.0 574.8L1036.3 575.8L1037.9 576.3L1038.6 578.5L1036.7 579.0L1037.1 581.2L1035.8 582.2L1038.3 582.8Z" fill="#4a80da" stroke="#fff" stroke-width="0.7"/>
<path d="M1035.0 581.6L1034.6 578.5L1035.6 576.0L1033.4 574.8L1031.9 576.5L1030.0 577.1L1030.5 579.6L1029.6 581.6L1030.7 582.4Z" fill="#4a80da" stroke="#fff" stroke-width="0.7"/>
<path d="M1040.1 597.2L1040.7 595.2L1040.8 592.8L1039.6 591.0L1036.7 589.4L1036.7 588.1L1040.5 587.9L1040.8 586.0L1042.5 586.4L1044.1 585.3L1045.3 583.3L1047.5 585.6L1049.5 586.4L1052.3 587.3L1051.6 589.9L1050.6 590.4L1049.6 592.2L1050.8 592.9L1050.5 594.5L1051.5 596.6L1050.2 597.7L1047.8 597.2L1046.1 598.9L1044.4 598.7Z" fill="#4a80da" stroke="#fff" stroke-width="0.7"/>
<path d="M1031.0 597.7L1032.5 596.7L1036.8 597.2L1040.1 597.2L1044.4 598.7L1046.2 599.6L1043.4 601.2L1042.3 603.0L1041.7 605.5L1041.4 606.6L1039.7 607.9L1036.9 607.9L1035.5 609.0L1034.6 607.8L1033.3 607.2L1033.1 606.6L1033.8 605.9L1033.4 603.7L1033.8 602.5L1033.9 601.2L1032.3 599.6L1031.4 599.7Z" fill="#4a80da" stroke="#fff" stroke-width="0.7"/>
<path d="M1031.4 599.7L1032.3 599.6L1033.9 601.2L1033.8 602.5L1033.4 603.7L1033.8 605.9L1033.1 606.6L1033.3 607.2L1031.4 607.5L1031.6 605.5L1030.7 604.7L1031.6 602.0Z" fill="#6698ea" stroke="#fff" stroke-width="0.7"/>
<path d="M1048.4 559.0L1048.3 561.5L1049.0 565.7L1050.8 568.8L1052.4 568.5L1055.1 565.7L1055.8 566.4L1057.2 562.8L1057.5 560.0L1056.9 555.5L1059.6 551.3L1060.0 547.5L1061.3 547.2L1062.4 542.5L1064.3 539.9L1066.7 538.2L1067.9 535.4L1069.6 539.2L1072.8 539.2L1074.3 535.1L1076.9 539.9L1077.7 537.2L1080.1 533.6L1076.5 531.1L1071.6 531.4L1065.5 534.4L1060.6 538.9L1058.2 544.1L1056.9 549.3L1055.1 552.7L1052.1 555.5Z" fill="#4a80da" stroke="#fff" stroke-width="0.7"/>
<path d="M1055.8 566.4L1056.3 568.8L1057.5 572.6L1059.6 574.5L1061.7 573.0L1062.4 569.9L1062.8 567.4L1064.9 565.5L1063.4 562.5L1063.5 559.7L1066.1 555.0L1068.5 552.2L1068.5 549.3L1071.7 548.4L1071.0 541.9L1067.3 537.9L1066.7 538.2L1064.3 539.9L1062.4 542.5L1061.3 547.2L1060.0 547.5L1059.6 551.3L1056.9 555.5L1057.5 560.0L1057.2 562.8Z" fill="#4a80da" stroke="#fff" stroke-width="0.7"/>
<path d="M1068.5 562.3L1070.2 564.5L1074.6 563.0L1076.2 562.8L1078.5 559.5L1080.7 556.6L1078.3 552.7L1078.9 548.7L1077.8 545.0L1078.9 542.5L1077.4 538.6L1076.9 539.9L1074.3 535.1L1072.8 539.2L1069.6 539.2L1067.9 535.4L1067.3 537.9L1071.0 541.9L1071.7 548.4L1073.2 550.7L1068.5 556.3Z" fill="#9dbdf4" stroke="#fff" stroke-width="0.7"/>
<path d="M1052.2 574.1L1052.8 570.8L1055.2 569.4L1055.1 572.1L1057.7 573.2L1057.4 575.4L1054.5 575.6L1053.9 575.8Z" fill="#4a80da" stroke="#fff" stroke-width="0.7"/>
<path d="M1049.7 583.9L1049.5 582.0L1050.8 581.2L1050.8 578.5L1052.8 577.7L1053.2 575.6L1054.5 575.6L1055.7 577.5L1058.9 576.5L1059.7 579.0L1060.1 581.2L1060.6 583.3L1057.2 584.9L1058.9 587.5L1058.2 589.9L1055.0 590.4L1051.6 589.9L1052.3 587.3L1050.1 586.4Z" fill="#4a80da" stroke="#fff" stroke-width="0.7"/>
<path d="M1045.3 583.3L1046.4 582.8L1047.9 580.8L1048.8 578.7L1050.8 578.5L1050.8 581.2L1049.5 582.0L1049.7 583.9L1050.1 586.4L1049.5 586.4L1047.5 585.6Z" fill="#4a80da" stroke="#fff" stroke-width="0.7"/>
<path d="M1059.6 577.7L1062.4 576.5L1065.0 576.0L1066.3 576.7L1070.4 576.9L1071.0 577.7L1071.5 580.2L1070.6 581.0L1071.6 584.1L1069.9 587.1L1067.9 586.4L1065.5 586.4L1063.0 584.7L1060.6 583.3L1060.1 581.2L1059.7 579.0Z" fill="#6d9eea" stroke="#fff" stroke-width="0.7"/>
<path d="M1057.2 584.9L1060.6 583.3L1063.0 584.7L1065.2 586.4L1063.3 587.7L1060.6 587.3L1058.9 587.5Z" fill="#4a80da" stroke="#fff" stroke-width="0.7"/>
<path d="M1053.9 590.1L1058.2 589.9L1058.9 587.5L1060.6 587.3L1063.3 587.7L1062.4 590.1L1061.8 591.5L1059.4 591.9L1057.2 591.0L1055.1 591.2Z" fill="#4a80da" stroke="#fff" stroke-width="0.7"/>
<path d="M1069.9 587.1L1071.6 584.1L1071.1 582.6L1073.4 581.8L1076.5 582.4L1079.5 582.9L1081.3 581.4L1083.9 581.0L1085.1 583.1L1088.4 585.3L1091.2 586.2L1090.7 589.5L1088.9 590.8L1086.2 591.7L1085.0 593.5L1083.2 592.8L1081.3 591.9L1079.9 591.9L1078.9 593.1L1078.4 594.0L1076.7 593.6L1076.6 591.2L1074.8 588.8L1072.7 589.7L1070.2 589.4Z" fill="#4177d3" stroke="#fff" stroke-width="0.7"/>
<path d="M1082.0 593.8L1083.3 595.5L1085.6 594.3L1086.8 594.0L1085.0 593.3Z" fill="#4177d3" stroke="#fff" stroke-width="0.7"/>
<path d="M1067.9 573.0L1069.1 575.2L1070.4 576.9L1071.0 577.7L1073.4 576.9L1074.8 573.9L1076.7 572.8L1076.2 570.4L1075.8 568.8L1076.5 565.2L1073.4 565.2L1071.0 565.9L1070.8 567.6L1072.1 569.0L1071.7 570.8L1069.1 569.9L1067.9 571.5Z" fill="#4a80da" stroke="#fff" stroke-width="0.7"/>
<path d="M1051.5 596.6L1052.7 595.7L1054.5 596.2L1055.7 598.7L1059.4 601.2L1061.6 602.8L1061.3 605.9L1062.4 605.2L1063.3 603.7L1062.4 602.8L1064.9 602.6L1063.0 601.2L1061.8 600.4L1059.4 598.7L1057.5 596.2L1057.3 594.0L1058.9 593.6L1059.0 591.9L1057.2 591.0L1055.1 591.2L1053.3 592.8L1050.8 592.9L1050.5 594.5Z" fill="#5a8fe5" stroke="#fff" stroke-width="0.7"/>
<path d="M1057.4 605.9L1061.3 605.5L1060.7 607.9Z" fill="#5a8fe5" stroke="#fff" stroke-width="0.7"/>
<path d="M1052.5 604.4L1054.3 600.9L1054.0 604.1Z" fill="#5a8fe5" stroke="#fff" stroke-width="0.7"/>
<path d="M1067.1 592.6L1068.5 591.5L1070.2 589.4L1072.7 589.7L1074.8 588.8L1076.6 591.2L1076.7 593.6L1078.4 594.0L1077.2 595.9L1075.6 596.2L1072.8 596.7L1069.9 595.9L1068.5 594.8Z" fill="#9dbdf4" stroke="#fff" stroke-width="0.7"/>
<path d="M1069.9 595.9L1072.8 596.7L1075.6 596.2L1077.2 595.9L1075.8 598.7L1076.5 599.7L1074.1 599.9L1071.6 600.2L1070.2 600.5L1069.6 599.1L1070.4 597.6Z" fill="#9dbdf4" stroke="#fff" stroke-width="0.7"/>
<path d="M1079.9 535.4L1082.7 537.2L1086.8 538.2L1091.5 541.9L1092.4 545.4L1089.9 547.5L1085.5 546.0L1083.5 547.2L1084.8 551.9L1086.8 553.6L1088.4 552.5L1090.9 551.9L1091.6 550.2L1092.9 547.2L1096.2 547.2L1096.6 539.9L1099.0 540.9L1100.9 542.8L1107.6 540.6L1110.0 539.9L1112.5 539.9L1114.9 538.9L1116.2 535.1L1120.4 537.2L1125.5 540.6L1123.8 536.1L1124.0 531.1L1125.9 524.0L1128.7 523.1L1131.1 526.0L1130.9 531.1L1131.2 537.5L1132.2 539.9L1130.1 546.3L1132.3 545.4L1133.4 542.5L1133.1 538.9L1135.8 538.6L1136.8 525.6L1139.3 525.2L1140.5 521.0L1148.4 518.8L1147.8 514.3L1150.0 513.3L1154.5 510.4L1161.9 508.4L1165.5 505.2L1169.5 500.2L1172.8 504.2L1178.9 506.8L1181.4 510.4L1180.8 521.5L1186.3 521.0L1192.4 520.2L1198.5 523.1L1199.1 527.2L1202.1 531.8L1209.4 529.2L1213.1 525.2L1220.4 526.0L1225.3 528.8L1227.7 531.4L1236.3 531.8L1243.6 536.1L1255.8 535.4L1255.8 559.0L1249.7 564.0L1241.2 564.3L1239.9 569.2L1241.8 572.8L1239.9 575.8L1237.5 579.6L1235.7 582.6L1233.5 583.5L1232.6 579.6L1232.0 573.2L1233.8 569.2L1237.5 565.2L1241.2 562.8L1231.4 565.2L1225.3 565.0L1216.8 565.7L1213.7 568.3L1209.4 575.4L1213.8 578.5L1214.7 581.6L1213.7 585.5L1213.6 588.3L1210.7 591.3L1207.4 596.7L1204.6 598.2L1202.1 598.6L1201.6 598.1L1202.5 597.2L1202.2 594.7L1204.7 594.3L1206.4 589.9L1206.8 588.4L1201.5 587.5L1197.8 586.0L1195.2 579.4L1189.7 579.0L1188.9 581.6L1186.0 586.4L1184.7 585.6L1183.2 585.6L1181.4 585.1L1174.7 587.0L1172.0 584.9L1167.1 584.5L1162.2 581.6L1161.6 585.8L1158.0 585.5L1154.8 583.9L1149.7 587.0L1148.8 587.1L1144.0 583.5L1139.9 583.9L1137.2 579.0L1135.6 577.5L1132.0 577.7L1128.7 575.0L1125.5 575.4L1121.8 576.7L1117.3 577.5L1116.7 578.5L1116.5 581.2L1117.3 582.9L1114.9 584.3L1111.5 583.9L1108.9 583.5L1106.1 582.2L1104.3 582.4L1101.6 585.5L1100.2 584.7L1099.4 587.9L1100.4 591.9L1102.7 592.4L1100.9 593.3L1100.0 595.7L1100.5 597.1L1101.3 599.6L1099.0 599.7L1095.4 598.2L1091.1 597.2L1088.0 595.0L1089.0 592.2L1090.7 589.5L1091.2 586.2L1088.4 585.3L1085.1 583.1L1083.9 581.0L1081.3 581.4L1082.2 578.7L1079.9 575.8L1080.0 574.1L1076.7 572.8L1076.2 570.4L1075.8 568.8L1076.5 565.2L1079.1 564.3L1077.1 562.8L1076.2 562.8L1078.5 559.5L1080.7 556.6L1078.3 552.7L1078.9 548.7L1077.8 545.0L1078.9 542.5L1077.4 538.6L1077.7 537.2Z" fill="#9dbdf4" stroke="#fff" stroke-width="0.7"/>
<path d="M1105.1 529.2L1110.0 532.9L1112.5 531.8L1110.0 524.0L1113.1 516.6L1119.2 510.4L1125.9 504.7L1122.8 504.2L1114.3 508.4L1109.4 516.6L1107.6 523.1Z" fill="#9dbdf4" stroke="#fff" stroke-width="0.7"/>
<path d="M1155.8 489.1L1160.6 497.3L1169.2 493.6L1164.3 479.8L1157.0 482.1Z" fill="#9dbdf4" stroke="#fff" stroke-width="0.7"/>
<path d="M1209.4 514.3L1215.5 511.9L1220.4 513.3L1213.1 519.7Z" fill="#9dbdf4" stroke="#fff" stroke-width="0.7"/>
<path d="M1098.4 482.1L1105.7 485.7L1115.5 482.1L1117.9 475.9L1108.2 474.2Z" fill="#9dbdf4" stroke="#fff" stroke-width="0.7"/>
<path d="M1215.5 592.8L1217.4 591.5L1216.8 586.4L1218.0 586.4L1217.0 580.6L1216.8 577.5L1216.1 576.9L1215.9 583.5L1215.3 588.3Z" fill="#9dbdf4" stroke="#fff" stroke-width="0.7"/>
<path d="M1074.1 599.9L1076.5 599.7L1077.7 600.9L1080.7 600.9L1085.0 599.6L1088.7 601.2L1092.9 600.4L1095.5 601.0L1097.0 603.3L1096.2 607.2L1094.0 607.3L1092.7 607.6L1089.6 607.9L1087.1 607.8L1086.2 607.9L1085.0 608.1L1082.0 608.8L1079.5 608.5L1076.5 607.9L1075.8 607.5L1074.6 605.2L1074.3 603.6L1074.6 601.5Z" fill="#4a80da" stroke="#fff" stroke-width="0.7"/>
<path d="M1086.8 618.6L1088.7 617.7L1089.9 614.9L1093.7 616.2L1096.8 618.9L1100.5 619.8L1101.5 620.0L1103.4 622.3L1104.3 624.6L1105.3 625.6L1105.7 627.3L1110.0 628.0L1109.4 631.3L1105.7 632.5L1102.1 633.1L1100.9 634.7L1099.3 634.7L1095.0 635.5L1094.4 635.9L1091.7 632.5L1089.9 628.6L1088.7 626.0L1086.8 622.6L1084.9 618.5Z" fill="#9dbdf4" stroke="#fff" stroke-width="0.7"/>
<path d="M1089.6 612.9L1092.3 611.4L1092.7 608.2L1094.0 607.3L1097.0 607.2L1097.8 609.2L1098.7 610.5L1098.1 612.1L1099.0 613.6L1100.6 615.2L1101.5 617.9L1100.5 617.6L1099.6 618.9L1096.8 618.9L1093.7 616.2L1089.9 614.9Z" fill="#6698ea" stroke="#fff" stroke-width="0.7"/>
<path d="M1105.3 625.6L1108.2 625.8L1110.0 624.0L1111.0 623.0L1111.1 624.8L1113.8 626.4L1115.3 628.2L1112.8 632.7L1110.0 634.5L1106.0 636.9L1107.0 635.1L1109.4 631.3L1110.0 628.0L1105.7 627.3Z" fill="#9dbdf4" stroke="#fff" stroke-width="0.7"/>
<path d="M1117.5 624.4L1117.3 622.9L1119.5 621.9L1118.9 620.1L1116.7 618.5L1123.4 617.9L1123.8 616.0L1126.8 615.0L1127.7 612.4L1129.2 611.2L1129.7 608.7L1133.2 607.5L1134.4 608.7L1137.2 609.8L1136.0 612.0L1132.6 613.4L1133.3 614.2L1134.2 614.6L1133.2 616.3L1132.0 617.9L1130.1 620.5L1128.3 620.8L1127.1 622.6L1128.7 624.5L1126.1 627.0L1124.5 626.0L1123.4 624.1Z" fill="#4a80da" stroke="#fff" stroke-width="0.7"/>
<path d="M1126.1 627.0L1128.7 624.5L1127.1 622.6L1128.3 620.8L1130.1 620.5L1132.0 617.9L1133.2 616.3L1134.2 614.6L1133.3 614.2L1132.6 613.4L1136.0 612.0L1137.2 609.8L1139.3 614.2L1138.4 615.9L1141.1 617.5L1144.2 619.3L1149.7 621.2L1150.6 621.6L1151.9 622.3L1154.5 622.1L1157.6 621.2L1159.7 620.1L1161.0 620.7L1158.4 623.3L1157.6 625.3L1156.1 627.8L1155.3 628.6L1154.3 628.4L1151.7 628.8L1150.0 629.2L1148.3 630.2L1145.8 632.2L1142.7 635.6L1140.3 636.5L1140.3 640.2L1139.8 643.5L1137.7 645.3L1136.8 646.3L1135.4 644.5L1133.6 640.4L1132.0 636.4L1131.1 632.5L1130.9 629.6L1128.3 630.2L1126.5 628.2Z" fill="#4a80da" stroke="#fff" stroke-width="0.7"/>
<path d="M1137.2 609.8L1140.3 610.1L1140.1 612.0L1138.7 614.5L1137.5 613.4Z" fill="#b9bbbe" stroke="#fff" stroke-width="0.7"/>
<path d="M1149.4 587.0L1153.0 584.9L1154.8 583.9L1158.0 585.5L1161.6 585.8L1162.2 581.6L1167.1 584.5L1172.0 584.9L1174.7 587.0L1181.4 585.1L1183.2 585.6L1184.7 585.6L1186.3 589.2L1188.5 591.0L1185.5 591.7L1180.8 594.8L1178.7 594.3L1177.7 597.2L1170.4 600.2L1165.3 598.6L1159.8 598.2L1158.6 595.9L1156.4 594.5L1153.2 594.0L1153.0 591.0L1150.8 589.0Z" fill="#9dbdf4" stroke="#fff" stroke-width="0.7"/>
<path d="M1202.0 612.0L1204.0 609.8L1207.6 609.6L1209.2 607.0L1211.3 606.1L1213.1 602.8L1213.1 600.5L1214.9 600.7L1215.5 603.6L1214.3 605.5L1214.2 608.2L1213.7 610.4L1212.1 610.7L1209.4 611.1L1207.2 612.3L1205.0 611.5Z" fill="#4a80da" stroke="#fff" stroke-width="0.7"/>
<path d="M1200.7 613.2L1202.1 612.1L1203.3 613.4L1202.4 615.9L1201.1 615.9Z" fill="#4a80da" stroke="#fff" stroke-width="0.7"/>
<path d="M1204.0 613.4L1206.5 611.7L1206.1 613.0L1204.6 613.9Z" fill="#4a80da" stroke="#fff" stroke-width="0.7"/>
<path d="M1213.1 599.1L1214.8 597.6L1215.2 593.8L1217.1 595.5L1219.8 597.4L1217.1 599.6L1214.6 599.9Z" fill="#4a80da" stroke="#fff" stroke-width="0.7"/>
<path d="M1196.1 606.4L1198.9 605.0L1200.2 607.5L1200.0 610.2L1196.6 611.4L1196.4 608.2Z" fill="#4a80da" stroke="#fff" stroke-width="0.7"/>
<path d="M1158.6 649.3L1161.2 649.8L1164.8 653.5L1169.2 657.4L1171.6 659.9L1171.4 663.3L1169.8 663.4L1167.1 661.1L1165.3 658.0L1162.6 654.1Z" fill="#9dbdf4" stroke="#fff" stroke-width="0.7"/>
<path d="M1170.6 664.5L1171.7 663.4L1174.8 664.4L1177.7 664.0L1182.1 665.8L1181.9 666.9L1177.7 666.3L1172.2 665.3Z" fill="#9dbdf4" stroke="#fff" stroke-width="0.7"/>
<path d="M1164.4 648.2L1165.9 652.8L1168.6 654.6L1169.4 654.4L1168.4 650.7L1167.0 648.6Z" fill="#9dbdf4" stroke="#fff" stroke-width="0.7"/>
<path d="M1062.4 692.7L1064.1 693.1L1066.7 687.5L1070.1 688.6L1072.8 688.7L1074.9 687.2L1077.7 684.2L1080.1 684.2L1081.3 686.4L1081.3 690.2L1082.4 690.3L1081.8 693.0L1080.0 695.4L1078.3 697.1L1076.2 699.7L1073.5 700.4L1069.1 700.7L1066.7 701.6L1064.7 700.6L1064.5 698.2L1063.5 695.4Z" fill="#4a80da" stroke="#fff" stroke-width="0.7"/>
<path d="M1075.2 694.1L1077.4 692.8L1078.2 694.4L1076.7 695.5L1075.4 694.7Z" fill="#f4f5f7" stroke="#fff" stroke-width="0.7"/>
<path d="M1078.4 657.9L1079.5 657.4L1083.7 657.4L1084.4 655.0L1085.0 653.9L1083.8 651.1L1083.2 651.6L1080.4 651.6L1079.9 651.9L1079.0 654.0Z" fill="#6698ea" stroke="#fff" stroke-width="0.7"/>
<path d="M1180.8 683.8L1181.4 689.8L1182.6 700.4L1186.3 701.9L1193.0 700.3L1199.7 696.9L1202.1 696.8L1205.8 698.2L1207.6 701.6L1210.4 698.4L1210.0 702.6L1213.1 706.3L1217.4 707.7L1220.8 708.2L1225.3 705.7L1226.8 700.3L1229.1 694.7L1229.7 691.9L1229.0 688.0L1226.3 684.4L1223.8 681.5L1220.8 679.7L1219.6 674.7L1217.5 673.5L1216.1 669.3L1214.9 672.8L1215.1 677.3L1212.5 677.9L1208.2 675.4L1209.3 671.3L1204.1 670.3L1200.9 672.2L1200.2 674.6L1195.8 674.1L1191.8 677.3L1189.9 680.8L1185.0 682.1Z" fill="#4a80da" stroke="#fff" stroke-width="0.7"/>
<path d="M1202.1 657.4L1205.8 657.2L1210.7 658.2L1214.3 659.4L1219.2 661.1L1222.9 663.5L1225.3 669.1L1221.6 668.5L1216.8 667.2L1214.3 667.2L1210.7 666.0L1210.0 662.3L1204.6 661.1L1202.1 658.6Z" fill="#eff1f3" stroke="#fff" stroke-width="0.7"/>
<path d="M931.0 473.1L936.5 468.7L942.0 466.0L945.1 462.5L953.8 460.9L962.4 462.5L966.0 468.3L961.6 474.6L957.7 477.8L953.8 486.4L949.1 491.1L949.1 497.4L945.9 499.0L944.4 505.2L939.7 506.8L934.9 504.5L938.9 499.0L936.5 494.2L939.7 488.0L938.1 484.0L945.9 480.1L942.8 477.8L936.5 479.3L933.4 477.8Z" fill="#4a80da"/>
<path d="M927.1 477.8L934.9 486.4L936.5 490.3L934.9 494.2L931.8 495.8L928.7 493.5L927.1 488.8L924.7 486.4L926.3 482.5Z" fill="#4a80da"/>
<path d="M928.7 506.0L934.9 511.5L942.8 512.3L943.6 516.2L934.9 516.2L930.2 514.7L928.7 510.0Z" fill="#4a80da"/>
<path d="M913.0 491.1L919.2 497.4L917.7 498.9L913.8 494.2Z" fill="#4a80da"/>
<path d="M922.4 495.8L924.7 498.9L923.2 499.7Z" fill="#4a80da"/>
<path d="M892.6 508.4L898.1 502.9L898.8 508.4L895.7 510.0Z" fill="#4a80da"/>
<path d="M898.8 510.0L911.4 510.0L911.4 513.1L903.5 516.2L899.6 513.1Z" fill="#4a80da"/>
<path d="M916.9 508.4L920.8 510.0L920.8 513.9L917.7 511.5Z" fill="#4a80da"/>
<path d="M924.0 511.5L927.1 513.1L926.3 515.4L924.0 514.7Z" fill="#4a80da"/>
<path d="M890.2 517.8L898.1 520.2L899.6 521.7L894.1 528.0L891.0 529.6L888.6 525.7Z" fill="#4a80da"/>
<path d="M897.3 524.1L905.9 524.1L911.4 522.5L913.0 529.6L916.9 534.3L916.1 538.2L905.9 538.2L900.4 533.5L898.1 528.8Z" fill="#4a80da"/>
<path d="M917.7 520.9L922.4 520.9L922.4 527.2L919.2 528.0L916.1 524.1Z" fill="#4a80da"/>
<path d="M925.5 520.2L930.2 520.9L928.7 525.6L926.3 527.2L924.7 524.1Z" fill="#4a80da"/>
<path d="M924.0 529.6L928.7 531.1L927.1 536.6L924.7 535.8Z" fill="#4a80da"/>
<path d="M935.0 521.5L942.0 520.5L946.7 523.3L950.6 527.9L955.3 532.6L958.5 535.8L962.4 541.3L966.0 546.8L963.5 550.0L962.0 555.0L960.5 558.6L955.0 555.0L950.0 549.0L947.0 544.0L944.5 541.0L940.0 536.0L936.5 530.0L934.5 525.0Z" fill="#4a80da"/>
</g>
<rect x="1179.5" y="624.5" width="47.5" height="97" fill="#fff" style="filter:drop-shadow(0 1px 1.5px rgba(0,0,0,.25))"/>
<path d="M1193.3 648.6h19.6M1203.1 638.8v19.6" stroke="#666" stroke-width="2.2"/>
<path d="M1186 673.4h35" stroke="#e6e6e6" stroke-width="1.2"/>
<path d="M1193.3 697.6h19.6" stroke="#666" stroke-width="2.2"/>
<rect x="1088" y="733.5" width="103" height="16" fill="#f5f5f5" fill-opacity="0.9"/>
<rect x="1193" y="733.5" width="46" height="16" fill="#f5f5f5" fill-opacity="0.9"/>
</svg>
<div class="a" style="left:1093.5px;top:736.7px;font-size:11px;color:#202124;letter-spacing:0.45px;-webkit-text-stroke:0.2px #202124">Map Data ©2026</div>
<div class="a" style="left:1199px;top:736.7px;font-size:11px;color:#202124;letter-spacing:0.6px;-webkit-text-stroke:0.2px #202124">Terms</div>
<div class="a ttl" style="left:71.7px;top:874.31px">Active users<span class="tri"></span> by <span class="du">Browser</span></div>
<div class="a" style="left:688px;top:871px;width:71px;height:33px;border:1px solid #d6d8de;border-radius:17px;background:#fff;box-shadow:0 0 0 0.5px rgba(214,216,222,.6)"></div>
<svg class="a" style="left:697px;top:876.5px" width="22" height="22"><circle cx="11" cy="11" r="9" fill="none" stroke="#0b5a1f" stroke-width="1.9"/><path d="M5.7 11.9L8.9 15.1L16.4 7.6" fill="none" stroke="#0b5a1f" stroke-width="1.9"/></svg>
<svg class="a" style="left:734px;top:885.0px" width="10" height="5"><path d="M0 0h10L5 5z" fill="#5f6368"/></svg>
<div class="a" style="left:190.4px;top:924.4px;width:1px;height:240px;background:#dadce0"></div>
<div class="a" style="left:347.8px;top:924.4px;width:1px;height:240px;background:#dadce0"></div>
<div class="a" style="left:505.3px;top:924.4px;width:1px;height:240px;background:#dadce0"></div>
<div class="a" style="left:662.8px;top:924.4px;width:1px;height:240px;background:#dadce0"></div>
<div class="a" style="left:191px;top:944.5px;width:476.2px;height:29.5px;background:#1a73e8"></div>
<div class="a" style="left:183px;top:959.0px;width:7px;height:1px;background:#dadce0"></div>
<div class="a" style="left:71.70px;top:952.10px;font-size:15px;color:#202124;-webkit-text-stroke:0.15px #202124">Chrome</div>
<div class="a" style="left:191px;top:978.0px;width:83.0px;height:29.5px;background:#1a73e8"></div>
<div class="a" style="left:183px;top:992.5px;width:7px;height:1px;background:#dadce0"></div>
<div class="a" style="left:71.70px;top:985.60px;font-size:15px;color:#202124;-webkit-text-stroke:0.15px #202124">Firefox</div>
<div class="a" style="left:191px;top:1011.5px;width:76.6px;height:29.5px;background:#1a73e8"></div>
<div class="a" style="left:183px;top:1026.0px;width:7px;height:1px;background:#dadce0"></div>
<div class="a" style="left:71.70px;top:1019.10px;font-size:15px;color:#202124;-webkit-text-stroke:0.15px #202124">Safari</div>
<div class="a" style="left:191px;top:1045.0px;width:70.3px;height:29.5px;background:#1a73e8"></div>
<div class="a" style="left:183px;top:1059.5px;width:7px;height:1px;background:#dadce0"></div>
<div class="a" style="left:71.70px;top:1052.60px;font-size:15px;color:#202124;-webkit-text-stroke:0.15px #202124">Edge</div>
<div class="a" style="left:191px;top:1078.5px;width:2.6px;height:29.5px;background:#1a73e8"></div>
<div class="a" style="left:183px;top:1093.0px;width:7px;height:1px;background:#dadce0"></div>
<div class="a" style="left:71.70px;top:1076.30px;font-size:15px;color:#202124;-webkit-text-stroke:0.15px #202124">Android</div>
<div class="a" style="left:71.70px;top:1093.30px;font-size:15px;color:#202124;-webkit-text-stroke:0.15px #202124">Webview</div>
<div class="a" style="left:191px;top:1112.0px;width:2.6px;height:29.5px;background:#1a73e8"></div>
<div class="a" style="left:183px;top:1126.5px;width:7px;height:1px;background:#dadce0"></div>
<div class="a" style="left:71.70px;top:1109.80px;font-size:15px;color:#202124;-webkit-text-stroke:0.15px #202124">Samsung</div>
<div class="a" style="left:71.70px;top:1126.80px;font-size:15px;color:#202124;-webkit-text-stroke:0.15px #202124">Internet</div>
<div class="a ttl" style="left:836.6px;top:874.01px"><span class="du">Active users</span> by <span class="du">Platform</span></div>
<div class="a" style="left:1453px;top:871px;width:71px;height:33px;border:1px solid #d6d8de;border-radius:17px;background:#fff;box-shadow:0 0 0 0.5px rgba(214,216,222,.6)"></div>
<svg class="a" style="left:1462px;top:876.5px" width="22" height="22"><circle cx="11" cy="11" r="9" fill="none" stroke="#0b5a1f" stroke-width="1.9"/><path d="M5.7 11.9L8.9 15.1L16.4 7.6" fill="none" stroke="#0b5a1f" stroke-width="1.9"/></svg>
<svg class="a" style="left:1499px;top:885.0px" width="10" height="5"><path d="M0 0h10L5 5z" fill="#5f6368"/></svg>
<div class="a" style="left:1385.00px;top:933.57px;font-size:13.5px;color:#3c4043;letter-spacing:-0.6px">WEB</div>
<div class="a" style="left:1384.00px;top:952.14px;font-size:27px;color:#202124;letter-spacing:-0.3px">100.0%</div>
<svg class="a" style="left:900px;top:930px" width="340" height="320"><circle cx="165" cy="161" r="148" fill="#d2e3fc" stroke="#4285f4" stroke-width="1.6"/></svg>
<div class="a" style="left:764.50px;width:600px;text-align:center;top:1082.46px;font-size:16px;color:#3c4043;-webkit-text-stroke:0.25px #3c4043">Web</div>
<div class="a" style="left:0px;top:1081px;width:1600px;height:66px;background:linear-gradient(to bottom,rgba(251,251,252,0.12) 0%,rgba(252,252,253,0.32) 30%,rgba(254,254,254,0.72) 62%,#fff 94%)"></div>
</body></html>
